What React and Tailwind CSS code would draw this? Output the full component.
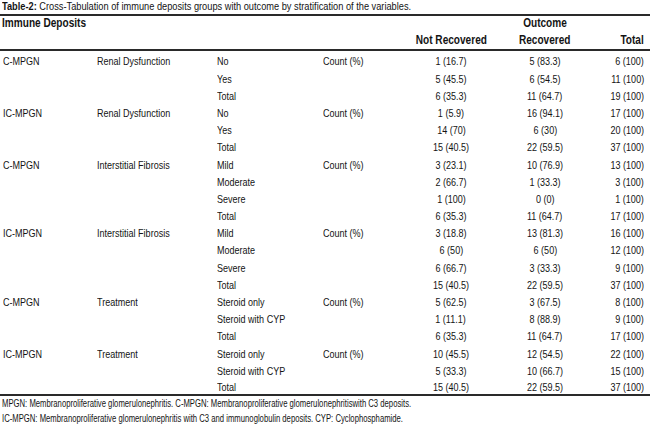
import React from 'react';

const FONT = { fontFamily: "'Liberation Sans', Arial, sans-serif" };

const groups = [
  {
    deposit: 'C-MPGN',
    variable: 'Renal Dysfunction',
    rows: [
      ['No', '1 (16.7)', '5 (83.3)', '6 (100)'],
      ['Yes', '5 (45.5)', '6 (54.5)', '11 (100)'],
      ['Total', '6 (35.3)', '11 (64.7)', '19 (100)'],
    ],
  },
  {
    deposit: 'IC-MPGN',
    variable: 'Renal Dysfunction',
    rows: [
      ['No', '1 (5.9)', '16 (94.1)', '17 (100)'],
      ['Yes', '14 (70)', '6 (30)', '20 (100)'],
      ['Total', '15 (40.5)', '22 (59.5)', '37 (100)'],
    ],
  },
  {
    deposit: 'C-MPGN',
    variable: 'Interstitial Fibrosis',
    rows: [
      ['Mild', '3 (23.1)', '10 (76.9)', '13 (100)'],
      ['Moderate', '2 (66.7)', '1 (33.3)', '3 (100)'],
      ['Severe', '1 (100)', '0 (0)', '1 (100)'],
      ['Total', '6 (35.3)', '11 (64.7)', '17 (100)'],
    ],
  },
  {
    deposit: 'IC-MPGN',
    variable: 'Interstitial Fibrosis',
    rows: [
      ['Mild', '3 (18.8)', '13 (81.3)', '16 (100)'],
      ['Moderate', '6 (50)', '6 (50)', '12 (100)'],
      ['Severe', '6 (66.7)', '3 (33.3)', '9 (100)'],
      ['Total', '15 (40.5)', '22 (59.5)', '37 (100)'],
    ],
  },
  {
    deposit: 'C-MPGN',
    variable: 'Treatment',
    rows: [
      ['Steroid only', '5 (62.5)', '3 (67.5)', '8 (100)'],
      ['Steroid with CYP', '1 (11.1)', '8 (88.9)', '9 (100)'],
      ['Total', '6 (35.3)', '11 (64.7)', '17 (100)'],
    ],
  },
  {
    deposit: 'IC-MPGN',
    variable: 'Treatment',
    rows: [
      ['Steroid only', '10 (45.5)', '12 (54.5)', '22 (100)'],
      ['Steroid with CYP', '5 (33.3)', '10 (66.7)', '15 (100)'],
      ['Total', '15 (40.5)', '22 (59.5)', '37 (100)'],
    ],
  },
];

const grid = 'grid grid-cols-[94px_120px_106px_77px_102px_86px_56px] pl-[3px]';

// condensed text: squeeze horizontally around the cell's alignment edge
function N({ children, at = 'left', bold }) {
  const origin = at === 'center' ? 'origin-center' : at === 'right' ? 'origin-right' : 'origin-left';
  return (
    <span className={`inline-block ${bold ? 'scale-x-[0.84]' : 'scale-x-[0.82]'} ${origin}`}>{children}</span>
  );
}

export default function App() {
  const flat = groups.flatMap((g) =>
    g.rows.map((r, i) => ({ first: i === 0, deposit: g.deposit, variable: g.variable, r }))
  );

  return (
    <div className="w-[650px] h-[430px] bg-white text-[#141414] overflow-hidden" style={FONT}>
      {/* Caption */}
      <div className="h-[16px] border-b-2 border-[#2a2a2a] pl-[2px] text-[11px] leading-[13px] whitespace-nowrap">
        <span className="inline-block scale-x-[0.84] origin-left">
          <span className="font-bold">Table-2:</span> Cross-Tabulation of immune deposits groups with outcome by stratification of the variables.
        </span>
      </div>

      {/* Header */}
      <div className="border-b-2 border-[#2a2a2a] pb-[2px] text-[12px] font-bold whitespace-nowrap">
        <div className={`${grid} h-[14px] leading-[14px]`}>
          <div className="col-span-2 -ml-[1px]"><N bold>Immune Deposits</N></div>
          <div />
          <div />
          <div />
          <div className="text-center"><N bold at="center">Outcome</N></div>
          <div />
        </div>
        <div className={`${grid} h-[14px] leading-[14px] mt-[3px]`}>
          <div />
          <div />
          <div />
          <div />
          <div className="text-center"><N bold at="center">Not Recovered</N></div>
          <div className="text-center"><N bold at="center">Recovered</N></div>
          <div className="text-right"><N bold at="right">Total</N></div>
        </div>
      </div>

      {/* Body */}
      <div className="pt-[2.4px] text-[11px]">
        {flat.map((row, i) => {
          const last = i === flat.length - 1;
          return (
            <div
              key={i}
              className={`${grid} whitespace-nowrap ${last ? 'h-[14px] leading-[14px]' : 'h-[17.2px] leading-[17.2px]'}`}
            >
              <div>{row.first && <N>{row.deposit}</N>}</div>
              <div>{row.first && <N>{row.variable}</N>}</div>
              <div><N>{row.r[0]}</N></div>
              <div>{row.first && <N>Count (%)</N>}</div>
              <div className="text-center"><N at="center">{row.r[1]}</N></div>
              <div className="text-center"><N at="center">{row.r[2]}</N></div>
              <div className="text-right"><N at="right">{row.r[3]}</N></div>
            </div>
          );
        })}
      </div>

      {/* Footnotes */}
      <div className="mt-[0.5px] border-t-2 border-[#2a2a2a] pl-[2px] text-[10px] leading-[15px] whitespace-nowrap">
        <p className="scale-x-[0.77] origin-left">MPGN: Membranoproliferative glomerulonephritis. C-MPGN: Membranoproliferative glomerulonephritiswith C3 deposits.</p>
        <p className="scale-x-[0.77] origin-left">IC-MPGN: Membranoproliferative glomerulonephritis with C3 and immunoglobulin deposits. CYP: Cyclophosphamide.</p>
      </div>
    </div>
  );
}
